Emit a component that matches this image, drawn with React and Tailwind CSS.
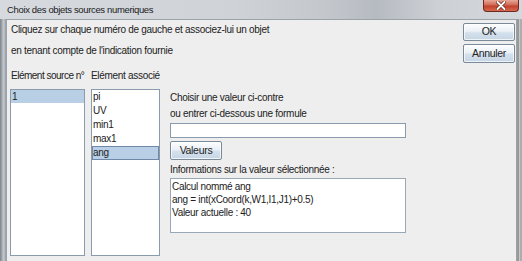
export default function App() {
  const listBorder = "border border-[#8a9bad]";
  const btn =
    "flex items-center justify-center border border-[#7a8a99] rounded-[2px] bg-[linear-gradient(#fdfeff,#eaf0f6_45%,#d4e0ec_55%,#c6d5e5)] shadow-[inset_0_0_0_1px_rgba(255,255,255,0.7)] text-[10.5px] text-[#222]";
  return (
    <div className="w-[522px] h-[261px] overflow-hidden flex flex-col font-['Liberation_Sans',Arial,sans-serif] text-[10px] tracking-[-0.3px] text-[#222]">
      {/* Title bar */}
      <div className="h-[19px] shrink-0 flex items-start justify-between bg-[linear-gradient(to_right,#d6dadf,#cfd3d8_45%,#c4c8cd_62%,#b6bbc1_72%,#cdd1d6_84%,#d4d8dc)]">
        <div className="pl-[7px] pt-[3px] text-[9.5px] leading-[13px] tracking-[-0.35px] text-[#1a1a1a] whitespace-nowrap">
          Choix des objets sources numeriques
        </div>
        <div className="mr-[3px] w-[36px] h-[12px] rounded-b-[4px] border border-t-0 border-[#6e2a20] bg-[linear-gradient(#e9a898,#d06a55_45%,#c2412d_55%,#d66a4e)] flex items-center justify-center">
          <svg width="10" height="9" viewBox="0 0 10 9">
            <path d="M1.5 1 L8.5 8 M8.5 1 L1.5 8" stroke="#6a2418" strokeWidth="3.4" strokeLinecap="round" />
            <path d="M1.5 1 L8.5 8 M8.5 1 L1.5 8" stroke="#ffffff" strokeWidth="1.9" strokeLinecap="round" />
          </svg>
        </div>
      </div>

      <div className="flex flex-1 min-h-0">
        {/* left frame */}
        <div className="w-[6px] shrink-0 bg-[linear-gradient(to_right,#7d848b,#9ea4aa_30%,#c3c8cd_55%,#b5bac0_80%,#8e959b)]" />

        {/* content */}
        <div className="flex-1 min-w-0 bg-[#eeeeee] border-l border-t border-r border-[#9aa2aa] flex flex-col pl-[3px] pr-[1px] pt-[3px]">
          {/* top row */}
          <div className="flex justify-between">
            <div className="flex flex-col pl-[1px] whitespace-nowrap">
              <div className="h-[21px] leading-[14px]">
                Cliquez sur chaque numéro de gauche et associez-lui un objet
              </div>
              <div className="leading-[14px]">en tenant compte de l'indication fournie</div>
            </div>
            <div className="flex flex-col gap-[3px] w-[52px]">
              <div className={`${btn} h-[18px]`}>OK</div>
              <div className={`${btn} h-[19px]`}>Annuler</div>
            </div>
          </div>

          {/* main row */}
          <div className="flex mt-[6px]">
            {/* list 1 */}
            <div className="w-[75px] shrink-0 flex flex-col">
              <div className="h-[20px] leading-[14px] pl-[1px] whitespace-nowrap tracking-[-0.5px]">Elément source n°</div>
              <div className={`h-[167px] bg-white ${listBorder}`}>
                <div className="h-[13px] leading-[13px] pl-[1px] bg-[#b8cfe5]">1</div>
              </div>
            </div>

            {/* list 2 */}
            <div className="w-[69px] shrink-0 ml-[6px] flex flex-col">
              <div className="h-[20px] leading-[14px] whitespace-nowrap">Elément associé</div>
              <div className={`h-[167px] bg-white ${listBorder} flex flex-col`}>
                <div className="h-[14px] leading-[14px] pl-[1px]">pi</div>
                <div className="h-[14px] leading-[14px] pl-[1px]">UV</div>
                <div className="h-[14px] leading-[14px] pl-[1px]">min1</div>
                <div className="h-[14px] leading-[14px] pl-[1px]">max1</div>
                <div className="h-[14px] leading-[12px] bg-[#b8cfe5] border border-[#6f88a8]">ang</div>
              </div>
            </div>

            {/* right panel */}
            <div className="w-[236px] shrink-0 ml-[10px] pt-[22px] flex flex-col whitespace-nowrap">
              <div className="leading-[14px]">Choisir une valeur ci-contre</div>
              <div className="leading-[14px] mt-[2px]">ou entrer ci-dessous une formule</div>
              <div className="h-[15px] mt-[2px] bg-white border border-[#8a9bad]" />
              <div className={`${btn} h-[19px] w-[52px] mt-[3px]`}>Valeurs</div>
              <div className="leading-[14px] mt-[3px]">Informations sur la valeur sélectionnée :</div>
              <div className="h-[55px] mt-[1px] bg-white border border-[#9aa8b6] pl-[1px] pt-[1px] leading-[13px]">
                <div>Calcul nommé ang</div>
                <div>ang = int(xCoord(k,W1,I1,J1)+0.5)</div>
                <div>Valeur actuelle : 40</div>
              </div>
            </div>
          </div>
        </div>

        {/* right frame */}
        <div className="w-[5px] shrink-0 bg-[linear-gradient(to_right,#a2a2a2,#8c8c8c_25%,#c8c8c8_50%,#a6a6a6_75%,#b4b4b4)]" />
      </div>
    </div>
  );
}
